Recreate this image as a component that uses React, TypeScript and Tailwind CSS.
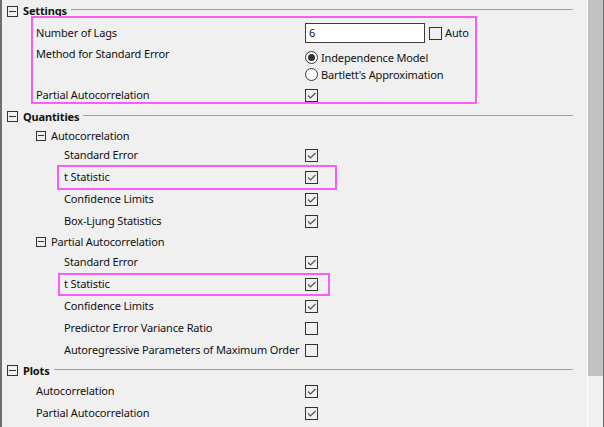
import React from "react";

function Minus({ small }: { small?: boolean }) {
  return (
    <span
      className={
        small
          ? "w-[10px] h-[10px] border border-[#333333] flex items-center justify-center shrink-0"
          : "w-[11px] h-[11px] border border-[#333333] flex items-center justify-center shrink-0"
      }
    >
      <span className={small ? "w-[6px] h-px bg-[#333333]" : "w-[7px] h-px bg-[#333333]"} />
    </span>
  );
}

function Check({ checked = true }: { checked?: boolean }) {
  return (
    <span className="w-[13px] h-[13px] border border-[#333333] flex items-center justify-center shrink-0 bg-[#f0f0f0]">
      {checked && (
        <svg width="11" height="11" viewBox="0 0 11 11">
          <path d="M2 5.5 L4.5 8 L9.5 3" fill="none" stroke="#555555" strokeWidth="1.2" />
        </svg>
      )}
    </span>
  );
}

function Radio({ checked }: { checked?: boolean }) {
  return (
    <span className="w-[13px] h-[13px] rounded-full border border-[#333333] bg-white flex items-center justify-center shrink-0">
      {checked && <span className="w-[7px] h-[7px] rounded-full bg-[#333333]" />}
    </span>
  );
}

function Header({ label, h }: { label: string; h: string }) {
  return (
    <div className={"flex items-center pl-[5px] " + h}>
      <Minus />
      <span className="ml-[5px] font-bold whitespace-nowrap">{label}</span>
      <div className="flex-1 h-px bg-[#a0a0a0] ml-[4px] mr-[14px] mb-[3px]" />
    </div>
  );
}

function Sub({ label, h }: { label: string; h: string }) {
  return (
    <div className={"flex items-center pl-[34px] " + h}>
      <Minus small />
      <span className="ml-[5px] whitespace-nowrap">{label}</span>
    </div>
  );
}

function Leaf({ label, indent, checked = true }: { label: string; indent: "l1" | "l2"; checked?: boolean }) {
  return (
    <div className="flex items-center h-[22px]">
      <span
        className={
          "w-[303px] shrink-0 whitespace-nowrap " + (indent === "l1" ? "pl-[34px]" : "pl-[62px]")
        }
      >
        {label}
      </span>
      <Check checked={checked} />
    </div>
  );
}

export default function App() {
  return (
    <div className="relative w-[604px] h-[427px] overflow-hidden bg-[#f0f0f0] flex text-[11px] tracking-[-0.15px] leading-[16px] text-[#111111] font-['Noto_Sans',sans-serif]">
      <div className="w-[2px] bg-[#6e6e6e] shrink-0" />
      <div className="flex-1 flex flex-col">
        <Header label="Settings" h="h-[22px]" />
        <div className="flex items-center h-[21px]">
          <span className="w-[303px] shrink-0 pl-[34px]">Number of Lags</span>
          <div className="w-[120px] h-[20px] border border-[#3c3c3c] bg-white flex items-center pl-[3px]">6</div>
          <span className="ml-[4px] mt-[1px]">
            <Check checked={false} />
          </span>
          <span className="ml-[3px]">Auto</span>
        </div>
        <div className="flex h-[41px]">
          <div className="w-[303px] shrink-0 pl-[34px] h-[22px] flex items-center">Method for Standard Error</div>
          <div className="flex flex-col pt-[6px]">
            <div className="flex items-center h-[17px]">
              <Radio checked />
              <span className="ml-[3px]">Independence Model</span>
            </div>
            <div className="flex items-center h-[17px]">
              <Radio />
              <span className="ml-[3px]">Bartlett's Approximation</span>
            </div>
          </div>
        </div>
        <Leaf label="Partial Autocorrelation" indent="l1" />
        <Header label="Quantities" h="h-[21px]" />
        <Sub label="Autocorrelation" h="h-[17px]" />
        <Leaf label="Standard Error" indent="l2" />
        <Leaf label="t Statistic" indent="l2" />
        <Leaf label="Confidence Limits" indent="l2" />
        <Leaf label="Box-Ljung Statistics" indent="l2" />
        <Sub label="Partial Autocorrelation" h="h-[19px]" />
        <Leaf label="Standard Error" indent="l2" />
        <Leaf label="t Statistic" indent="l2" />
        <Leaf label="Confidence Limits" indent="l2" />
        <Leaf label="Predictor Error Variance Ratio" indent="l2" checked={false} />
        <Leaf label="Autoregressive Parameters of Maximum Order" indent="l2" checked={false} />
        <Header label="Plots" h="h-[19px]" />
        <Leaf label="Autocorrelation" indent="l1" />
        <Leaf label="Partial Autocorrelation" indent="l1" />
      </div>
      <div className="w-[17px] shrink-0 flex">
        <div className="w-px bg-white" />
        <div className="w-[15px] flex flex-col">
          <div className="h-[376px] bg-[#c1c1c1]" />
        </div>
        <div className="w-px bg-[#6e6e6e]" />
      </div>
      <div className="absolute left-[31px] top-[16px] w-[446px] h-[88px] border-2 border-[#fb5cf7] pointer-events-none" />
      <div className="absolute left-[57px] top-[165px] w-[280px] h-[25px] border-2 border-[#fb5cf7] pointer-events-none" />
      <div className="absolute left-[58px] top-[273px] w-[272px] h-[23px] border-2 border-[#fb5cf7] pointer-events-none" />
    </div>
  );
}
